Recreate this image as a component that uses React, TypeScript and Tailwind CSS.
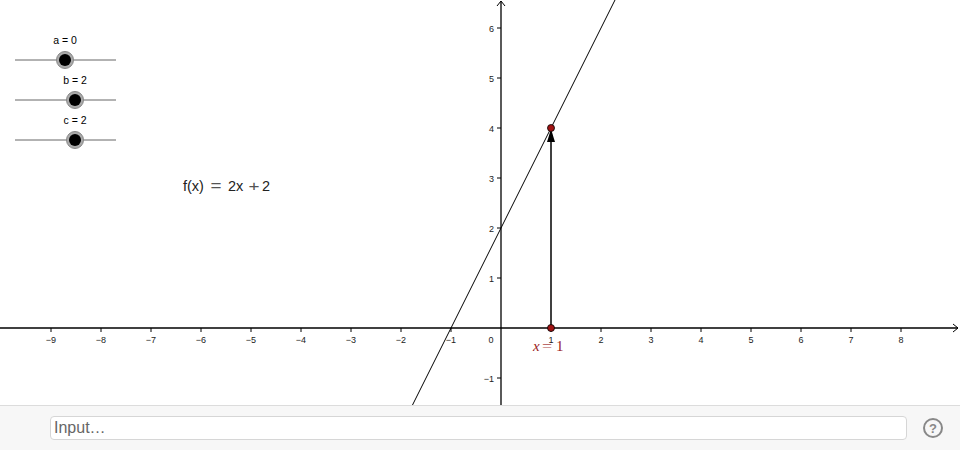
import React from 'react';

const OX = 501;
const OY = 328;
const U = 50;
const W = 960;
const H = 405;

const px = (x: number) => OX + x * U;
const py = (y: number) => OY - y * U;

const xTicks = [-9, -8, -7, -6, -5, -4, -3, -2, -1, 1, 2, 3, 4, 5, 6, 7, 8];
const yTicks = [-1, 1, 2, 3, 4, 5, 6];

const sliders = [
  { name: 'a', value: 0, y: 60 },
  { name: 'b', value: 2, y: 100 },
  { name: 'c', value: 2, y: 140 },
];

const fmt = (n: number) => (n < 0 ? `\u2212${-n}` : `${n}`);

// a math operator stretched wide, like the one GeoGebra renders
function Op({ x, y, ch, size, fill, sx }: { x: number; y: number; ch: string; size: number; fill: string; sx: number }) {
  return (
    <text transform={`translate(${x},${y}) scale(${sx},1)`} fontSize={size} fill={fill}>
      {ch}
    </text>
  );
}

function Graph() {
  // f(x) = 2x + 2 clipped to the view
  const yTop = (OY - 0) / U;
  const yBot = (OY - H) / U;
  const x1 = (yBot - 2) / 2;
  const x2 = (yTop - 2) / 2;

  return (
    <svg width={W} height={H} className="block" style={{ fontFamily: '"Liberation Sans", Arial, sans-serif' }}>
      {/* axes */}
      <line x1={0} y1={OY} x2={W - 2} y2={OY} stroke="#000" strokeWidth={1.3} />
      <polyline points={`${W - 7},${OY - 4} ${W - 2},${OY} ${W - 7},${OY + 4}`} fill="none" stroke="#000" strokeWidth={1} />
      <line x1={OX} y1={H} x2={OX} y2={1} stroke="#000" strokeWidth={1.3} />
      <polyline points={`${OX - 4},${6} ${OX},${1} ${OX + 4},${6}`} fill="none" stroke="#000" strokeWidth={1} />

      {xTicks.map((t) => (
        <g key={`x${t}`}>
          <line x1={px(t)} y1={OY} x2={px(t)} y2={OY + 4} stroke="#000" strokeWidth={1} />
          <text x={px(t)} y={OY + 15} fontSize={9} textAnchor="middle" fill="#222">
            {fmt(t)}
          </text>
        </g>
      ))}
      <text x={OX - 10} y={OY + 15} fontSize={9} textAnchor="middle" fill="#222">
        0
      </text>
      {yTicks.map((t) => (
        <g key={`y${t}`}>
          <line x1={OX - 4} y1={py(t)} x2={OX} y2={py(t)} stroke="#000" strokeWidth={1} />
          <text x={OX - 7} y={py(t) + 3.5} fontSize={9} textAnchor="end" fill="#222">
            {fmt(t)}
          </text>
        </g>
      ))}

      {/* function */}
      <line x1={px(x1)} y1={H} x2={px(x2)} y2={0} stroke="#000" strokeWidth={1} />

      {/* vector */}
      <line x1={px(1)} y1={py(0)} x2={px(1)} y2={py(4) + 10} stroke="#000" strokeWidth={1.5} />
      <polygon
        points={`${px(1)},${py(4) + 1} ${px(1) - 4},${py(4) + 14} ${px(1) + 4},${py(4) + 14}`}
        fill="#000"
      />

      {/* points */}
      <circle cx={px(1)} cy={py(4)} r={3.5} fill="#a11313" stroke="#000" strokeWidth={0.8} />
      <circle cx={px(1)} cy={py(0)} r={3.5} fill="#a11313" stroke="#000" strokeWidth={0.8} />

      <g style={{ fontFamily: '"Liberation Serif", "Times New Roman", serif' }}>
        <text x={533} y={351} fontSize={15} fontStyle="italic" fill="#9a1b1b">
          x
        </text>
        <Op x={542} y={351} ch="=" size={15} fill="#b04a4a" sx={1.2} />
        <text x={556} y={351} fontSize={15} fill="#9a1b1b">
          1
        </text>
      </g>

      {/* sliders */}
      {sliders.map((s) => {
        const kx = 65 + s.value * 5;
        return (
          <g key={s.name}>
            <text x={kx} y={s.y - 16} fontSize={10.5} textAnchor="middle" fill="#000">
              {`${s.name} = ${s.value}`}
            </text>
            <line x1={15} y1={s.y} x2={116} y2={s.y} stroke="#666" strokeWidth={1} />
            <circle cx={kx} cy={s.y} r={8.5} fill="#aaa" stroke="#888" strokeWidth={1} />
            <circle cx={kx} cy={s.y} r={6} fill="#000" />
          </g>
        );
      })}

      <text x={183} y={191} fontSize={14.5} fill="#222">
        f(x)
      </text>
      <Op x={210.5} y={191} ch="=" size={14.5} fill="#555" sx={1.3} />
      <text x={228} y={191} fontSize={14.5} fill="#222">
        2x
      </text>
      <Op x={248.5} y={191} ch="+" size={14.5} fill="#555" sx={1.3} />
      <text x={262} y={191} fontSize={14.5} fill="#222">
        2
      </text>
    </svg>
  );
}

export default function App() {
  return (
    <div className="w-[960px] h-[450px] bg-white flex flex-col overflow-hidden">
      <div className="h-[405px] shrink-0">
        <Graph />
      </div>
      <div className="flex-1 flex items-center gap-4 pl-[50px] pr-[17px] bg-[#f7f7f7] border-t border-[#dcdcdc]">
        <div className="flex-1 h-[24px] bg-white border border-[#d6d6d6] rounded-[4px] flex items-center px-[3px]">
          <span className="text-[16px] text-[#666] leading-none" style={{ fontFamily: '"Liberation Sans", Arial, sans-serif' }}>
            Input…
          </span>
        </div>
        <div className="w-[20px] h-[20px] rounded-full border-2 border-[#888] flex items-center justify-center">
          <span className="text-[13px] font-bold text-[#888] leading-none" style={{ fontFamily: '"Liberation Sans", Arial, sans-serif' }}>
            ?
          </span>
        </div>
      </div>
    </div>
  );
}
